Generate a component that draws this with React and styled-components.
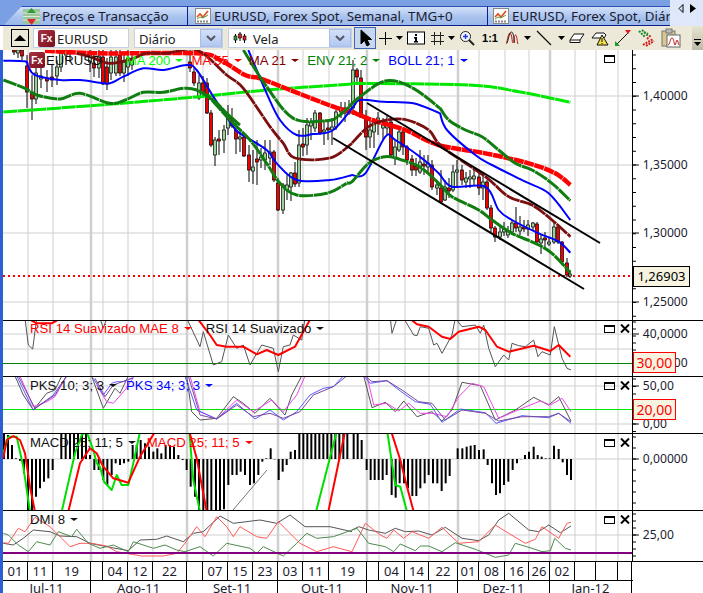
import styled, { createGlobalStyle } from 'styled-components';

const GlobalStyle = createGlobalStyle`
  html, body { margin: 0; padding: 0; background: #fff; }
`;

const Page = styled.div`
  width: 703px;
  height: 593px;
  overflow: hidden;
  display: flex;
  flex-direction: column;
  background: #fff;
  font-family: "Liberation Sans", Arial, sans-serif;
  position: relative;
`;

const TabBar = styled.div`
  height: 26px;
  display: flex;
  background: #dfe8fa;
  flex: none;
`;

const TabStrip = styled.div`
  width: 670px;
  padding-top: 6px;
  padding-left: 4px;
  box-sizing: border-box;
  display: flex;
  overflow: hidden;
  background: #7b9fe3;
  border-bottom: 1px solid #0a1f8a;
`;

const Tab = styled.div`
  width: ${(p) => p.$w}px;
  padding-left: ${(p) => p.$pad}px;
  box-sizing: border-box;
  display: flex;
  align-items: center;
  gap: ${(p) => p.$gap}px;
  flex: none;
  white-space: nowrap;
  overflow: hidden;
  font: 13.4px "Noto Sans", sans-serif;
  color: #1c1c30;
  background: linear-gradient(#d3e1f9, #a9c3ee 55%, #9ab8ea);
  border-top: 1px solid #2a4fb0;
  border-right: 1px solid #0a1f8a;
  clip-path: ${(p) => (p.$first ? 'polygon(18px 0, 100% 0, 100% 100%, 0 100%)' : 'none')};
  svg { flex: none; }
`;

const TabScroll = styled.div`
  flex: 1;
  display: flex;
  align-items: center;
  justify-content: center;
  gap: 6px;
  padding-bottom: 10px;
  font-size: 9px;
`;

const Toolbar = styled.div`
  height: 24px;
  margin-left: 3px;
  display: flex;
  align-items: center;
  background: #ece9d8;
  padding-left: 8px;
  flex: none;
`;

const CollapseButton = styled.div`
  width: 16px;
  height: 16px;
  border: 1px solid #000;
  display: flex;
  align-items: center;
  justify-content: center;
  margin-right: 4px;
  flex: none;
`;

const Combo = styled.div`
  width: ${(p) => p.$w}px;
  height: 20px;
  box-sizing: border-box;
  background: #fff;
  border: 1px solid #c3d0ea;
  display: flex;
  align-items: center;
  margin-right: ${(p) => p.$gap}px;
  padding-left: ${(p) => p.$pad}px;
  font: 13px "Noto Sans", sans-serif;
  color: #222;
  flex: none;
  gap: ${(p) => p.$inner || 1}px;
`;

const ComboText = styled.span`
  position: relative;
  top: 1px;
`;

const ComboArrow = styled.div`
  margin-left: auto;
  width: 22px;
  height: 18px;
  background: linear-gradient(#d4e0f8, #b2c8f2);
  border: 1px solid #a8bde8;
  box-sizing: border-box;
  display: flex;
  align-items: center;
  justify-content: center;
`;

const Tools = styled.div`
  display: flex;
  align-items: center;
  height: 24px;
  flex: none;
`;

const ToolButton = styled.div`
  width: ${(p) => p.$w}px;
  height: 22px;
  box-sizing: border-box;
  display: flex;
  align-items: center;
  justify-content: center;
  flex: none;
  font: bold 11px "Liberation Sans", sans-serif;
  background: ${(p) => (p.$active ? '#c8d6f0' : 'transparent')};
  border: ${(p) => (p.$active ? '1px solid #3c68b8' : '0')};
`;

const Overflow = styled.div`
  margin-left: auto;
  width: 11px;
  height: 24px;
  box-sizing: border-box;
  background: linear-gradient(#e6e3d2, #bdbaa8);
  display: flex;
  flex-direction: column;
  align-items: center;
  justify-content: flex-end;
  padding-bottom: 3px;
`;

const Charts = styled.div`
  flex: 1;
  border-left: 3px solid #2a5fd6;
  display: flex;
  flex-direction: column;
`;

const Panel = styled.section`
  position: relative;
  display: flex;
  height: ${(p) => p.$h}px;
  border-bottom: 1px solid #000;
  flex: none;
`;

const Plot = styled.svg`
  display: block;
  width: 629px;
  height: 100%;
  flex: none;
`;

const AxisSvg = styled.svg`
  display: block;
  flex: 1;
  height: 100%;
  border-left: 1px solid #000;
  font: 12.3px "Noto Sans", sans-serif;
  fill: #1c1c30;
`;

const Legend = styled.div`
  position: absolute;
  top: ${(p) => p.$top}px;
  left: ${(p) => p.$left}px;
  display: flex;
  align-items: center;
  font-size: 13.2px;
  white-space: nowrap;
`;

const LegendItem = styled.span`
  color: ${(p) => p.$color};
  margin-right: ${(p) => p.$gap || 0}px;
  display: inline-flex;
  align-items: center;
  gap: 5px;
  &::after {
    content: "";
    display: ${(p) => (p.$plain ? 'none' : 'block')};
    border: 4px solid transparent;
    border-top: 3px solid currentColor;
    border-bottom: 0;
  }
`;

const FxBadge = styled.span`
  width: ${(p) => p.$size}px;
  height: ${(p) => p.$size}px;
  margin-right: 1px;
  border-radius: 2px;
  background: linear-gradient(135deg, #a8303f, #7a1020);
  color: #fff;
  font: bold 10px "Liberation Sans", sans-serif;
  display: inline-flex;
  align-items: center;
  justify-content: center;
  flex: none;
`;

const WindowButtons = styled.div`
  position: absolute;
  top: ${(p) => p.$top}px;
  left: 601px;
  display: flex;
  align-items: center;
  gap: 5px;
`;

const MaxBox = styled.div`
  width: 9px;
  height: 5px;
  border: 1px solid #000;
  border-top-width: 2px;
`;

const PriceTag = styled.div`
  position: absolute;
  left: 630px;
  top: ${(p) => p.$top}px;
  width: ${(p) => p.$w}px;
  height: 21px;
  box-sizing: border-box;
  border: 1px solid ${(p) => p.$color};
  color: ${(p) => p.$color};
  background: #f6f4e0;
  font: ${(p) => p.$size}px/19px "Noto Sans", sans-serif;
  text-align: center;
`;

const DateRow = styled.div`
  display: flex;
  width: 630px;
  height: ${(p) => p.$h}px;
  border-bottom: ${(p) => (p.$line ? '1px solid #000' : '0')};
  flex: none;
  font: 13px/${(p) => p.$lh}px "Noto Sans", sans-serif;
  color: #1c1c30;
`;

const DateCell = styled.div`
  width: ${(p) => p.$w}px;
  box-sizing: border-box;
  height: 100%;
  border-right: 1px solid #000;
  text-align: center;
  overflow: hidden;
  flex: none;
`;

const z = (ox, oy, s) =>
  s.trim().split(/\s+/).map((p) => {
    const [x, y] = p.split(',').map(Number);
    return [ox + x / 3, oy + y / 3];
  });

const poly = (pts) => pts.map((p) => p.map((v) => v.toFixed(1)).join(',')).join(' ');

// catmull-rom through the points so the bands look soft
const smooth = (pts) => {
  let d = `M${pts[0][0]} ${pts[0][1]}`;
  for (let i = 0; i < pts.length - 1; i++) {
    const a = pts[i - 1] || pts[i];
    const b = pts[i];
    const c = pts[i + 1];
    const e = pts[i + 2] || c;
    d += `C${b[0] + (c[0] - a[0]) / 6} ${b[1] + (c[1] - a[1]) / 6} ${c[0] - (e[0] - b[0]) / 6} ${c[1] - (e[1] - b[1]) / 6} ${c[0]} ${c[1]}`;
  }
  return d;
};

const VLINES = [28, 53, 103, 128, 153, 203, 228, 253, 303, 329, 379, 405, 429, 479, 505, 529, 575, 596, 618];
const MONTHS = [91, 187, 278, 367, 458, 550];

const DAYS = [
  ['01', 25], ['11', 25], ['19', 38], ['', 12], ['04', 25], ['12', 25], ['22', 34], ['', 16], ['07', 25],
  ['15', 25], ['23', 25], ['03', 25], ['11', 26], ['19', 38], ['', 12], ['04', 26], ['14', 24], ['22', 29],
  ['01', 21], ['08', 26], ['16', 24], ['26', 21], ['02', 25], ['', 21], ['', 22], ['', 14],
];
const MONTH_CELLS = [
  ['Jul-11', 88], ['Ago-11', 96], ['Set-11', 91], ['Out-11', 89], ['Nov-11', 91], ['Dez-11', 92], ['Jan-12', 82],
];

// x, body top, body bottom, high, low, red?
const CANDLES = [
  [14, 50, 52, 48, 55, 1], [18, 50, 53, 48, 58, 0], [22, 50, 56, 48, 60, 1], [27, 66, 92, 55, 108, 1], [32, 92, 99, 75, 120, 1],
  [36, 73, 99, 68, 104, 0], [41, 76, 79, 68, 88, 0], [47, 78, 81, 70, 92, 1], [52, 77, 80, 65, 87, 1], [57, 67, 76, 60, 85, 0],
  [61, 52, 67, 48, 72, 0], [66, 50, 55, 48, 60, 0], [70, 50, 54, 48, 62, 1], [90, 52, 62, 48, 72, 0], [94, 63, 68, 52, 77, 1], [99, 56, 68, 50, 78, 0],
  [103, 57, 84, 50, 85, 1], [107, 67, 84, 58, 90, 1], [111, 57, 73, 50, 80, 0], [116, 57, 73, 50, 76, 0], [120, 55, 73, 50, 76, 1],
  [124, 62, 73, 52, 82, 0], [128, 58, 67, 50, 76, 0], [132, 60, 65, 52, 70, 0],
  [190, 62, 68, 50, 72, 1], [194, 72, 83, 68, 86, 1], [199, 83, 98, 75, 100, 0], [203, 83, 93, 76, 98, 1], [207, 83, 113, 78, 114, 1],
  [211, 113, 145, 110, 147, 1], [215, 140, 155, 137, 166, 0], [219, 139, 141, 130, 155, 1], [224, 130, 140, 125, 153, 0], [228, 115, 128, 105, 135, 0],
  [232, 118, 126, 108, 128, 1], [236, 130, 139, 120, 154, 1], [240, 137, 139, 130, 152, 0], [244, 137, 156, 135, 157, 1], [249, 155, 170, 145, 182, 1],
  [253, 167, 171, 150, 184, 0], [257, 159, 162, 140, 185, 1], [261, 157, 160, 148, 168, 0], [265, 153, 160, 140, 170, 0], [270, 152, 158, 140, 165, 0],
  [274, 152, 180, 150, 182, 1], [278, 183, 210, 178, 211, 1], [283, 185, 210, 183, 214, 0], [287, 185, 190, 175, 200, 0], [291, 173, 187, 172, 201, 0],
  [295, 173, 184, 162, 187, 1], [299, 145, 183, 130, 187, 0], [303, 144, 147, 128, 156, 1], [307, 125, 145, 118, 155, 0], [311, 122, 126, 118, 140, 0],
  [315, 113, 128, 110, 132, 0], [320, 113, 133, 112, 135, 1], [324, 130, 132, 120, 145, 0], [328, 128, 130, 122, 140, 1], [332, 127, 130, 118, 145, 0],
  [336, 112, 127, 110, 130, 0], [341, 108, 112, 102, 118, 0], [345, 108, 113, 102, 122, 0], [349, 108, 113, 100, 115, 0], [353, 70, 108, 60, 115, 0],
  [357, 70, 77, 68, 85, 1], [361, 78, 117, 70, 118, 1], [366, 117, 137, 110, 150, 1], [370, 130, 137, 120, 148, 0], [374, 120, 132, 118, 148, 0],
  [378, 118, 122, 112, 135, 0], [383, 125, 128, 118, 140, 0], [387, 123, 128, 115, 135, 0], [391, 122, 155, 118, 156, 1], [395, 147, 158, 140, 165, 0],
  [399, 132, 150, 128, 152, 0], [403, 132, 147, 128, 155, 1], [407, 147, 160, 145, 165, 1], [412, 159, 170, 155, 176, 1], [416, 166, 170, 158, 176, 1],
  [420, 162, 172, 150, 174, 0], [424, 164, 166, 155, 175, 1], [428, 163, 167, 155, 172, 0], [432, 165, 187, 160, 190, 1], [437, 185, 188, 180, 195, 0],
  [441, 188, 202, 170, 203, 1], [445, 187, 200, 180, 201, 0], [449, 188, 191, 178, 198, 1], [453, 172, 190, 165, 192, 0], [457, 170, 172, 160, 188, 0],
  [462, 170, 180, 165, 185, 1], [466, 178, 182, 172, 188, 0], [470, 177, 179, 170, 188, 0], [474, 176, 179, 170, 186, 0], [479, 177, 188, 172, 195, 1],
  [483, 182, 188, 175, 200, 0], [487, 182, 208, 180, 210, 1], [491, 208, 228, 205, 232, 1], [495, 228, 237, 226, 242, 1], [500, 232, 237, 225, 240, 0],
  [504, 229, 232, 222, 236, 0], [508, 231, 235, 226, 238, 0], [512, 223, 232, 220, 235, 0], [516, 223, 228, 207, 232, 1], [520, 227, 231, 216, 235, 0],
  [524, 227, 229, 220, 232, 1], [528, 225, 229, 220, 236, 0], [533, 223, 227, 222, 230, 0], [537, 224, 242, 222, 245, 1], [541, 239, 243, 235, 254, 0],
  [545, 238, 240, 232, 248, 1], [549, 242, 244, 238, 246, 0], [554, 227, 242, 222, 244, 0], [558, 227, 242, 224, 244, 1], [562, 242, 262, 241, 265, 1],
  [567, 263, 275, 258, 277, 1], [570, 274, 276, 270, 278, 0],
];

const MA200 = { c: '#00e800', w: 3, dash: '14 .6' };
const MA55 = { c: '#ff0000', w: 4.5, dash: '10 .6' };
const MA21 = { c: '#7a0f0f', w: 2.8, dash: '14 .6' };
const BOLL = { c: '#0000ff', w: 2 };
const ENV = { c: '#0f7d0f', w: 3, dash: '14 .6' };

const BANDS = [
  { ...MA200, o: [0, 0], p: '10,336 300,315 600,290 800,270 1056,252' },
  { ...MA200, o: [352, 0], p: '0,250 350,255 500,275 655,307' },
  { ...MA55, o: [0, 0], p: '135,152 300,160 590,160 660,180 735,225 780,235 870,270 1000,320 1056,336' },
  { ...MA55, o: [352, 130], p: '0,-55 60,-30 160,0 260,45 400,70 530,100 610,130 655,165' },
  { ...MA21, o: [0, 0], p: '230,160 270,170 330,190 400,175 440,160 500,160 590,150 680,225 730,265 810,380 850,430 885,474 990,474 1056,430' },
  { ...MA21, o: [352, 130], p: '0,39 50,-10 105,-30 165,-30 230,0 270,50 400,140 470,200 540,225 600,270 655,320' },
  { ...BOLL, o: [0, 50], p: '10,32 75,34 85,50 105,75 180,90 240,90 300,98 330,100 370,80 430,55 490,60 560,45 590,60 640,140 700,230 720,250 800,300 830,340 890,390 990,390 1056,375' },
  { ...BOLL, o: [352, 130], p: '0,135 40,130 100,20 130,30 210,85 260,130 300,170 400,170 440,240 480,270 560,310 620,335 655,368' },
  { ...BOLL, o: [200, 50], p: '145,0 200,130 240,210 290,255 340,252 400,240 460,170 480,150 550,155 640,160 720,190' },
  { ...BOLL, o: [352, 130], p: '264,-51 285,0 370,75 420,105 520,155 590,190 655,270' },
  { ...ENV, o: [0, 50], p: '10,90 75,115 110,135 180,147 240,130 330,160 380,148 430,127 490,127 550,115 590,120 640,150 680,190 720,225' },
  { ...ENV, o: [200, 50], p: '130,0 200,110 280,205 380,212 420,195 480,140 560,92 640,115 720,175' },
  { ...ENV, o: [352, 130], p: '264,-66 290,-30 340,0 390,20 440,60 490,100 540,120 600,160 655,212' },
  { ...ENV, o: [200, 50], p: '0,125 30,145 90,210 150,270 200,340 240,400 290,435 380,430 440,400' },
  { ...ENV, o: [352, 130], p: '-15,158 0,155 50,100 100,80 150,90 210,115 270,170 300,200 380,240 420,270 480,310 550,340 600,370 655,428' },
];

const RSI_GRAY = [
  z(0, 315, '75,10 85,90 98,102 110,10'),
  z(0, 315, '300,10 310,40 320,10'),
  z(0, 315, '560,10 600,95 610,50 640,150 665,140 685,60 710,100 730,90 750,150 785,90 820,100 835,170 850,95 870,90 880,60 905,75 915,10'),
  z(352, 315, '115,10 120,55 135,10'),
  z(352, 315, '155,10 185,60 195,62 205,35 230,40 245,90 255,85 270,115 300,60 310,10 330,35 370,30 385,55 395,30 410,100 430,155 455,120 470,135 480,85 500,92 520,95 545,75 558,125 570,110 595,120 607,35 630,130 645,160 657,165'),
];
const RSI_RED = [
  z(0, 315, '90,14 110,25 155,25 175,14'),
  z(0, 315, '595,14 630,60 650,90 680,95 730,95 770,118 800,105 835,120 885,95 930,14'),
  z(352, 315, '178,14 195,28 230,35 270,65 295,72 320,50 380,35 400,45 435,95 470,110 545,92 595,108 620,90 655,125'),
];

const PKS = [
  ['#555', ['45,183 70,240 100,285 120,260 140,235 165,225 185,183', '275,183 310,280 345,220 360,235 385,183', '560,183 575,290 600,315 650,310 700,245 730,265 765,295 810,250 855,300 875,240 905,183'],
    '35,183 60,278 100,262 130,290 155,258 195,305 240,290 270,318 300,285 330,202 385,212 430,315 490,285 545,247 590,270 620,245 657,318'],
  ['#ee44ee', ['60,183 100,275 140,260 165,245 190,200 200,183', '290,210 320,260 340,265 375,225 400,188', '570,183 600,290 650,312 710,255 760,290 815,255 850,290 890,240 915,183'],
    '45,183 65,270 105,265 140,288 170,265 205,295 240,295 285,305 320,245 360,205 395,215 440,310 510,280 565,258 595,270 630,250 657,290'],
  ['#5a5aff', ['50,183 100,285 160,240 200,183', '280,190 310,240 335,205 350,200 370,200 400,188', '555,183 590,285 650,312 710,265 765,312 810,285 850,315 890,290 930,240 970,220 1000,215 1030,183'],
    '35,183 55,205 105,197 145,228 190,260 235,268 270,322 325,282 400,293 432,325 510,302 590,308 620,295 657,325'],
  ['#7a4a9a', ['55,183 105,280 165,240 200,183', '285,190 315,245 340,210 400,188', '565,183 600,300 650,312 710,270 760,305 810,295 850,310 900,290 940,240 1000,215 1040,183'],
    '40,183 60,200 105,197 150,225 200,260 240,265 280,315 330,285 400,295 440,318 510,305 590,305 620,295 657,320'],
];

const MACD_BARS = [
  ...z(0, 430, '12,5 24,15 36,45 48,85 60,92 72,130 84,240 96,240 108,200 120,175 132,155 145,145 158,120 184,5 197,5 210,5 222,5 234,5 246,5 258,5 270,75 283,120 296,120 310,150 322,165 335,135 347,100 360,105 372,100 385,95 398,45 410,45 422,30 435,40 447,50 460,65 472,55 484,70 497,45 510,45 522,50 535,75 548,90 560,120 572,170 585,200 597,240 610,240 622,240 634,240 648,240 660,240 672,238 685,165 697,135 710,135 722,125 735,135 750,165 762,160 775,135 787,95 799,85 812,55 824,88 836,150 848,125 860,105 872,65 885,60 898,5 910,5 922,5 934,5 946,5 958,5 970,5 982,5 994,5 1006,5 1018,5 1030,5 1042,5'),
  ...z(352, 430, '5,5 17,5 29,30 44,120 56,150 68,150 80,150 92,150 104,135 119,195 131,203 143,160 156,160 168,175 181,198 193,198 205,175 218,160 230,135 243,160 256,160 269,183 281,160 293,138 317,55 331,55 344,50 356,47 368,45 381,60 395,58 407,105 420,160 432,195 444,190 456,165 469,155 482,120 495,100 507,88 519,75 531,65 545,50 557,75 569,80 581,85 593,85 606,47 620,57 632,97 645,135 657,150'),
];

const MACD_RED = [
  z(0, 430, '10,85 20,30 40,18 60,30 75,70 90,170 105,245'),
  z(0, 430, '205,245 240,100 270,55 290,70 310,110 340,145 385,158 420,80 465,5'),
  z(0, 430, '568,5 590,85 620,245'),
  z(0, 430, '985,245 1035,5'),
  z(352, 430, '118,5 145,90 165,170 185,245'),
];
const MACD_GREEN = [
  z(0, 430, '10,70 25,20 50,20 70,110 90,245'),
  z(0, 430, '185,245 225,70 245,15 260,5 280,60 290,100 300,110 312,155 335,180 350,135 365,165 385,165 400,100 420,5'),
  z(0, 430, '568,5 580,150 600,245'),
  z(0, 430, '948,245 1010,5'),
  z(352, 430, '106,5 120,100 130,165 145,170 165,245'),
];

const DMI = [
  ['#555', '10,340 40,345 70,325 100,300 150,305 180,318 230,320 270,340 320,350 385,362 420,330 470,328 500,318 550,335 580,310 610,305 660,258 700,280 780,270 830,280 870,255 915,290 990,290 1056,305',
    '0,300 20,290 50,300 100,310 130,295 160,305 200,303 240,315 280,292 330,325 380,332 410,315 440,270 470,250 530,300 560,305 590,285 625,308 657,288'],
  ['#ff5a5a', '10,338 25,340 55,295 75,305 105,262 150,290 185,325 210,350 240,340 275,340 320,348 350,365 425,378 490,378 530,370 555,340 590,290 615,320 650,260 680,290 700,320 720,290 770,320 800,325 835,275 900,340 950,365 1000,350 1056,365',
    '0,365 40,280 85,315 105,325 125,300 155,325 180,305 230,325 270,292 320,340 380,335 430,285 470,310 520,340 550,328 570,290 620,325 645,280 657,277'],
  ['#4f8a4f', '10,310 25,315 55,345 85,365 110,335 150,345 175,305 215,320 230,298 265,340 300,355 340,345 385,365 400,335 460,355 495,345 530,360 555,365 600,350 640,378 680,340 750,355 770,370 790,350 850,378 890,340 920,310 950,325 1000,320 1056,300',
    '0,300 15,295 50,340 100,350 125,365 145,342 190,362 205,348 230,348 270,365 310,338 370,358 430,382 470,375 490,340 540,355 570,365 595,362 608,325 640,355 657,360'],
];

const Grid = ({ top, h, rows = [] }) => (
  <>
    {VLINES.map((x) => <line key={x} x1={x} x2={x} y1={top} y2={top + h} stroke="#cfcfcf" />)}
    {MONTHS.map((x) => <line key={x} x1={x} x2={x} y1={top} y2={top + h} stroke="#cfcfcf" strokeWidth="2.5" />)}
    {rows.map((y) => <line key={y} x1="3" x2="632" y1={y} y2={y} stroke="#cfcfcf" />)}
  </>
);

const PlotSvg = ({ top, h, children }) => (
  <Plot viewBox={`3 ${top} 629 ${h}`} preserveAspectRatio="none">{children}</Plot>
);

const Axis = ({ top, h, ticks, labels }) => (
  <AxisSvg viewBox={`632 ${top} 71 ${h}`} preserveAspectRatio="none">
    {ticks.map((y) => <line key={y} x1="632" x2="635" y1={y} y2={y} stroke="#000" />)}
    {labels.map(([y, t]) => (
      <g key={t}>
        <line x1="632" x2="638" y1={y} y2={y} stroke="#000" />
        <text x="642" y={y + 4.5}>{t}</text>
      </g>
    ))}
  </AxisSvg>
);

const range = (a, step, n) => Array.from({ length: n }, (_, i) => a + i * step);

const Lines = ({ sets, color, width = 1 }) =>
  sets.map((s, i) => (
    <polyline key={i} points={poly(s)} fill="none" stroke={color} strokeWidth={width} strokeLinejoin="round" />
  ));

const Windows = ({ top, close = true }) => (
  <WindowButtons $top={top}>
    <MaxBox />
    {close && (
      <svg width="10" height="9" viewBox="0 0 10 9"><path d="M1 .5l8 8M9 .5l-8 8" stroke="#000" strokeWidth="2" /></svg>
    )}
  </WindowButtons>
);

const Chevron = () => (
  <svg width="10" height="6" viewBox="0 0 10 6"><path d="M1 1l4 4 4-4" fill="none" stroke="#556" strokeWidth="2" /></svg>
);

const SmallArrow = () => (
  <ToolButton $w={10}><svg width="7" height="4" viewBox="0 0 7 4"><path d="M0 0h7L3.500 4z" /></svg></ToolButton>
);

const ChartIcon = () => (
  <svg width="16" height="16" viewBox="0 0 16 16">
    <rect x=".5" y=".5" width="15" height="15" fill="#fff" stroke="#8a8a8a" />
    <path d="M2 9l3-3 3 3 5-6" fill="none" stroke="#e04a1a" strokeWidth="1.6" />
    <path d="M2 11l3-2 3 1 5-3" fill="none" stroke="#5aa040" />
    <path d="M2 13.500h12" stroke="#8a8a8a" strokeDasharray="2 1" strokeWidth="2" />
  </svg>
);

const PricesIcon = () => (
  <svg width="17" height="17" viewBox="0 0 17 17">
    <rect x="0" y="1" width="17" height="15" fill="#9cc59c" />
    <path d="M0 5h17M0 8.500h17M0 12h17" stroke="#d8ecd8" />
    <path d="M8.500 0L13 5H4z" fill="#2f9a3a" />
    <path d="M8.500 17L4 11h9z" fill="#e02828" />
  </svg>
);

export default function App() {
  return (
    <Page>
      <GlobalStyle />
      <TabBar>
        <TabStrip>
          <Tab $w={184} $pad={19} $gap={2} $first><PricesIcon />Preços e Transacção</Tab>
          <Tab $w={300} $pad={7} $gap={3}><ChartIcon />EURUSD, Forex Spot, Semanal, TMG+0</Tab>
          <Tab $w={190} $pad={5} $gap={3}><ChartIcon />EURUSD, Forex Spot, Diário</Tab>
        </TabStrip>
        <TabScroll>
          <svg width="6" height="9" viewBox="0 0 6 9"><path d="M5 .5L1 4.500 5 8.500z" fill="none" stroke="#000" /></svg>
          <svg width="6" height="9" viewBox="0 0 6 9"><path d="M0 0l6 4.500L0 9z" /></svg>
        </TabScroll>
      </TabBar>

      <Toolbar>
        <CollapseButton>
          <svg width="12" height="6" viewBox="0 0 12 6"><path d="M6 0l6 6H0z" /></svg>
        </CollapseButton>
        <Combo $w={96} $gap={5} $pad={4}><FxBadge $size={17}>Fx</FxBadge><ComboText>EURUSD</ComboText></Combo>
        <Combo $w={89} $gap={5} $pad={4}><ComboText>Diário</ComboText><ComboArrow><Chevron /></ComboArrow></Combo>
        <Combo $w={124} $gap={2} $pad={4} $inner={6}>
          <svg width="14" height="14" viewBox="0 0 14 14">
            <path d="M2.500 3v9M7 1v9M11.500 3v9" stroke="#000" />
            <rect x="1" y="5" width="3" height="4" fill="#3a9a3a" stroke="#000" strokeWidth=".6" />
            <rect x="5.500" y="3" width="3" height="4" fill="#e02020" stroke="#000" strokeWidth=".6" />
            <rect x="10" y="5" width="3" height="4" fill="#e02020" stroke="#000" strokeWidth=".6" />
          </svg>
          <ComboText>Vela</ComboText><ComboArrow><Chevron /></ComboArrow>
        </Combo>
        <Tools>
          <ToolButton $w={22} $active>
            <svg width="13" height="18" viewBox="0 0 13 18"><path d="M2 1v14l3.500-3.500L8 17l2.500-1.500L8 10.500h4.500z" stroke="#000" /></svg>
          </ToolButton>
          <ToolButton $w={18}>
            <svg width="15" height="15" viewBox="0 0 15 15"><path d="M7.500 1v13M1 7.500h13" stroke="#000" /></svg>
          </ToolButton>
          <SmallArrow />
          <ToolButton $w={24}>
            <svg width="18" height="14" viewBox="0 0 18 14">
              <rect x=".5" y="1" width="17" height="12" fill="#fff" stroke="#000" />
              <path d="M8 3h2v2H8zM7 6h3v4h1v1.500H7V10h1V7.500H7z" />
            </svg>
          </ToolButton>
          <ToolButton $w={18}>
            <svg width="15" height="15" viewBox="0 0 15 15"><path d="M4.500 1v13M10.500 1v13M1 4.500h13M1 10.500h13" stroke="#222" /></svg>
          </ToolButton>
          <SmallArrow />
          <ToolButton $w={22}>
            <svg width="16" height="16" viewBox="0 0 16 16">
              <circle cx="6.500" cy="6.500" r="5" fill="#f4f6ff" stroke="#222" />
              <path d="M10 10l5 5" stroke="#222" strokeWidth="2" />
              <path d="M6.500 4v5M4 6.500h5" stroke="#1a3ae0" strokeWidth="1.400" />
            </svg>
          </ToolButton>
          <ToolButton $w={24}>1:1</ToolButton>
          <ToolButton $w={20}>
            <svg width="14" height="14" viewBox="0 0 14 14">
              <path d="M1 13C2 13 3 2 5 2s2 10 3 10 1-8 2.500-8S12 11 13 13" fill="none" stroke="#c01818" />
              <path d="M2 12C3 11 4 1 6.500 1S9 12 10 12" fill="none" stroke="#222" />
            </svg>
          </ToolButton>
          <SmallArrow />
          <ToolButton $w={24}>
            <svg width="16" height="16" viewBox="0 0 16 16"><path d="M1 1l14 14" stroke="#111" strokeWidth="1.200" /></svg>
          </ToolButton>
          <SmallArrow />
          <ToolButton $w={22}>
            <svg width="16" height="12" viewBox="0 0 16 12"><path d="M1 8l4-6h10l-4 6v2.500H1zM1 8h10" fill="#fff" stroke="#111" /></svg>
          </ToolButton>
          <ToolButton $w={24}>
            <svg width="18" height="16" viewBox="0 0 18 16">
              <path d="M1 8l4-5h8l2 2-2 3H5z" fill="#fff" stroke="#111" />
              <path d="M11 5l-5 10h11z" fill="#f4e040" stroke="#111" />
              <path d="M11 8v4M11 13v1" stroke="#111" />
            </svg>
          </ToolButton>
          <ToolButton $w={22}>
            <svg width="18" height="18" viewBox="0 0 18 18">
              <path d="M3 15L14 4" stroke="#111" />
              <path d="M11 1h6l-3 4z" fill="#e02020" />
              <path d="M1 17v-5l5 5z" fill="#1c9a2c" />
            </svg>
          </ToolButton>
          <ToolButton $w={24}>
            <svg width="18" height="18" viewBox="0 0 18 18">
              <path d="M2 2l6 6M5 1l6 6M7 3l4 2" stroke="#1c8a2c" strokeWidth="2" strokeDasharray="2 1" />
              <path d="M6 16l10-6M9 17l8-5M10 10l4-4" stroke="#d02020" strokeWidth="2" strokeDasharray="2 1" />
            </svg>
          </ToolButton>
          <ToolButton $w={26}>
            <svg width="20" height="20" viewBox="0 0 20 20">
              <rect x="1" y="3" width="13" height="15" fill="#d8c890" stroke="#777" />
              <rect x="5" y="1" width="6" height="4" fill="#bbb" stroke="#777" />
              <rect x="6" y="7" width="13" height="12" fill="#fff" stroke="#666" />
              <path d="M7 17c2 0 2-7 4-7s2 7 3 7 1-5 2-5 1 4 2 5" fill="none" stroke="#c01818" />
            </svg>
          </ToolButton>
        </Tools>
        <Overflow>
          <svg width="7" height="8" viewBox="0 0 7 8"><path d="M0 0h7v1H0zM0 3h7L3.500 7z" /></svg>
        </Overflow>
      </Toolbar>

      <Charts>
        <Panel $h={270}>
          <PlotSvg top={50} h={270}>
            <Grid top={50} h={270} rows={[96, 165, 233, 302]} />
            <line x1="3" x2="632" y1="276" y2="276" stroke="#f00" strokeWidth="2" strokeDasharray="2 3" />
            {CANDLES.map(([x, t, b, hi, lo, red]) => (
              <g key={x}>
                <line x1={x} x2={x} y1={hi} y2={lo} stroke="#000" />
                <rect x={x - 1.5} y={t} width="3" height={b - t} fill={red ? '#f00000' : '#9ad09a'} stroke="#000" strokeWidth=".7" />
              </g>
            ))}
            {BANDS.map((b, i) => (
              <path key={i} d={smooth(z(b.o[0], b.o[1], b.p))} fill="none" stroke={b.c} strokeWidth={b.w} strokeDasharray={b.dash} />
            ))}
            <line x1="367" y1="103" x2="600" y2="243" stroke="#000" strokeWidth="2" />
            <line x1="333" y1="138" x2="584" y2="289" stroke="#000" strokeWidth="2" />
          </PlotSvg>
          <Axis top={50} h={270}
            ticks={range(55, 13.75, 20)}
            labels={[[96, '1,40000'], [165, '1,35000'], [233, '1,30000'], [302, '1,25000']]} />
          <Legend $top={2} $left={26}>
            <FxBadge $size={16}>Fx</FxBadge>
            <LegendItem $color="#111" $plain $gap={24}>EURUSD</LegendItem>
            <LegendItem $color="#00ff00" $gap={8}>MA 200</LegendItem>
            <LegendItem $color="#ff0000" $gap={7}>MA 55</LegendItem>
            <LegendItem $color="#800000" $gap={8}>MA 21</LegendItem>
            <LegendItem $color="#008000" $gap={8}>ENV 21; 2</LegendItem>
            <LegendItem $color="#0000ff">BOLL 21; 1</LegendItem>
          </Legend>
          <Windows top={5} close={false} />
          <PriceTag $top={216} $w={57} $color="#000" $size={13}>1,26903</PriceTag>
        </Panel>

        <Panel $h={55}>
          <PlotSvg top={321} h={55}>
            <Grid top={321} h={55} rows={[334, 349]} />
            <line x1="3" x2="632" y1="363.500" y2="363.500" stroke="#008000" />
            <Lines sets={RSI_GRAY} color="#555" />
            <Lines sets={RSI_RED} color="#f00" width={2} />
          </PlotSvg>
          <Axis top={321} h={55} ticks={range(322, 7, 8)} labels={[[334, '40,0000'], [363, '30,0000']]} />
          <Legend $top={0} $left={27}>
            <LegendItem $color="#ff0000" $gap={14}>RSI 14 Suavizado MAE 8</LegendItem>
            <LegendItem $color="#111">RSI 14 Suavizado</LegendItem>
          </Legend>
          <Windows top={3} />
          <PriceTag $top={31} $w={43} $color="#f00" $size={14}>30,00</PriceTag>
        </Panel>

        <Panel $h={56}>
          <PlotSvg top={377} h={56}>
            <Grid top={377} h={56} rows={[386, 424]} />
            <line x1="3" x2="632" y1="409.500" y2="409.500" stroke="#00e800" />
            {PKS.map(([c, left, right]) => (
              <Lines key={c} color={c} sets={[...left.map((s) => z(0, 315, s)), z(352, 315, right)]} />
            ))}
          </PlotSvg>
          <Axis top={377} h={56} ticks={range(379, 7.5, 8)} labels={[[386, '50,00'], [424, '0,00']]} />
          <Legend $top={1} $left={27}>
            <LegendItem $color="#111" $gap={9}>PKS 10; 3; 3</LegendItem>
            <LegendItem $color="#0000ff">PKS 34; 3; 3</LegendItem>
          </Legend>
          <Windows top={4} />
          <PriceTag $top={22} $w={43} $color="#f00" $size={14}>20,00</PriceTag>
        </Panel>

        <Panel $h={76}>
          <PlotSvg top={434} h={76}>
            <Grid top={434} h={76} rows={[459]} />
            {MACD_BARS.map(([x, y], i) => (
              <line key={i} x1={x} x2={x} y1="459" y2={y} stroke="#000" strokeWidth="2" />
            ))}
            <line x1="233" y1="510" x2="267" y2="470" stroke="#777" />
            <Lines sets={MACD_GREEN} color="#00e000" width={2} />
            <Lines sets={MACD_RED} color="#f00" width={2} />
          </PlotSvg>
          <Axis top={434} h={76} ticks={range(437, 11, 7)} labels={[[459, '0,00000']]} />
          <Legend $top={1} $left={27}>
            <LegendItem $color="#111" $gap={11}>MACD 25; 11; 5</LegendItem>
            <LegendItem $color="#ff0000">MACD 25; 11; 5</LegendItem>
          </Legend>
          <Windows top={4} />
        </Panel>

        <Panel $h={50}>
          <PlotSvg top={511} h={50}>
            <Grid top={511} h={50} rows={[535]} />
            {DMI.map(([c, left, right]) => (
              <Lines key={c} color={c} sets={[z(0, 430, left), z(352, 430, right)]} />
            ))}
            <line x1="3" x2="632" y1="553" y2="553" stroke="#800080" strokeWidth="2" />
          </PlotSvg>
          <Axis top={511} h={50} ticks={range(514, 7, 7)} labels={[[535, '25,00']]} />
          <Legend $top={1} $left={27}>
            <LegendItem $color="#111">DMI 8</LegendItem>
          </Legend>
          <Windows top={4} />
        </Panel>

        <DateRow $h={18} $lh={18} $line>
          {DAYS.map(([t, w], i) => <DateCell key={i} $w={w}>{t}</DateCell>)}
        </DateRow>
        <DateRow $h={13} $lh={14}>
          {MONTH_CELLS.map(([t, w]) => <DateCell key={t} $w={w}>{t}</DateCell>)}
        </DateRow>
      </Charts>
    </Page>
  );
}
